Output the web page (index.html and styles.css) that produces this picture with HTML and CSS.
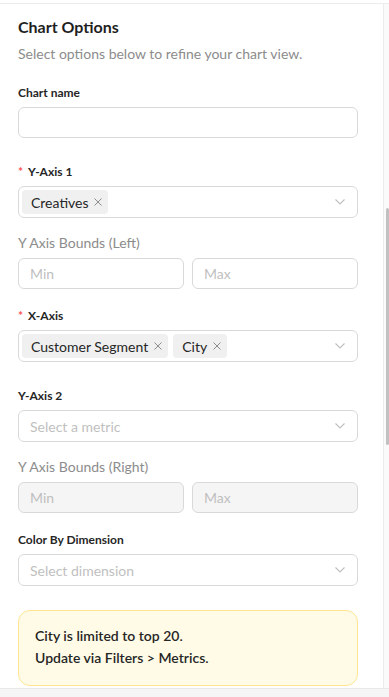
FILE: index.html
```html
<!DOCTYPE html>
<html>
<head>
    <title>Chart Options</title>
    <link rel="stylesheet" href="styles.css">
</head>
<body>
    <div class="main">
        <div class="panel">
            <h2 class="panel-title">Chart Options</h2>
            <p class="panel-desc">Select options below to refine your chart view.</p>

            <div class="field">
                <label class="field-label">Chart name</label>
                <input type="text" class="text-input">
            </div>

            <div class="field with-bounds">
                <label class="field-label"><span class="required">*</span>Y-Axis 1</label>
                <div class="select">
                    <div class="select-tags">
                        <span class="tag">Creatives<svg class="tag-close" width="8" height="8" viewBox="0 0 8 8"><path d="M0.5 0.5 L7.5 7.5 M7.5 0.5 L0.5 7.5" stroke="#8c8c8c" stroke-width="1"/></svg></span>
                    </div>
                    <svg class="chevron" width="10" height="6" viewBox="0 0 10 6"><path d="M0.5 0.5 L5 5 L9.5 0.5" fill="none" stroke="#bfbfbf" stroke-width="1.1"/></svg>
                </div>
            </div>

            <div class="bounds">
                <div class="bounds-label">Y Axis Bounds (Left)</div>
                <div class="bounds-row">
                    <input type="text" class="text-input" placeholder="Min">
                    <input type="text" class="text-input" placeholder="Max">
                </div>
            </div>

            <div class="field">
                <label class="field-label"><span class="required">*</span>X-Axis</label>
                <div class="select">
                    <div class="select-tags">
                        <span class="tag">Customer Segment<svg class="tag-close" width="8" height="8" viewBox="0 0 8 8"><path d="M0.5 0.5 L7.5 7.5 M7.5 0.5 L0.5 7.5" stroke="#8c8c8c" stroke-width="1"/></svg></span>
                        <span class="tag">City<svg class="tag-close" width="8" height="8" viewBox="0 0 8 8"><path d="M0.5 0.5 L7.5 7.5 M7.5 0.5 L0.5 7.5" stroke="#8c8c8c" stroke-width="1"/></svg></span>
                    </div>
                    <svg class="chevron" width="10" height="6" viewBox="0 0 10 6"><path d="M0.5 0.5 L5 5 L9.5 0.5" fill="none" stroke="#bfbfbf" stroke-width="1.1"/></svg>
                </div>
            </div>

            <div class="field with-bounds">
                <label class="field-label">Y-Axis 2</label>
                <div class="select">
                    <span class="select-placeholder">Select a metric</span>
                    <svg class="chevron" width="10" height="6" viewBox="0 0 10 6"><path d="M0.5 0.5 L5 5 L9.5 0.5" fill="none" stroke="#bfbfbf" stroke-width="1.1"/></svg>
                </div>
            </div>

            <div class="bounds">
                <div class="bounds-label">Y Axis Bounds (Right)</div>
                <div class="bounds-row">
                    <input type="text" class="text-input" placeholder="Min" disabled>
                    <input type="text" class="text-input" placeholder="Max" disabled>
                </div>
            </div>

            <div class="field">
                <label class="field-label">Color By Dimension</label>
                <div class="select">
                    <span class="select-placeholder">Select dimension</span>
                    <svg class="chevron" width="10" height="6" viewBox="0 0 10 6"><path d="M0.5 0.5 L5 5 L9.5 0.5" fill="none" stroke="#bfbfbf" stroke-width="1.1"/></svg>
                </div>
            </div>

            <div class="notice">
                City is limited to top 20.<br>
                Update via Filters &gt; Metrics.
            </div>
        </div>
        <div class="scroll-track">
            <div class="scroll-thumb"></div>
        </div>
    </div>
    <div class="footer"></div>
</body>
</html>
```

FILE: styles.css
```css
* {
    box-sizing: border-box;
}

body {
    font-family: Lato, "Noto Sans", sans-serif;
    background-color: #fff;
    color: #262626;
    margin: 0;
    padding: 0;
    height: 697px;
    display: flex;
    flex-direction: column;
    overflow: hidden;
}

.main {
    flex: 1;
    display: flex;
    margin-top: 3px;
    border-top: 1px solid #ececec;
    min-height: 0;
}

.panel {
    flex: 1;
    padding: 12px 25px 0 18px;
    border-right: 1px solid #ececec;
    overflow: hidden;
}

.panel-title {
    font-size: 16px;
    line-height: 22px;
    font-weight: 700;
    color: #1f1f1f;
    margin: 0;
}

.panel-desc {
    font-size: 14px;
    line-height: 20px;
    color: #8c8c8c;
    margin: 6px 0 20px;
}

.field {
    margin-bottom: 25px;
}

.field.with-bounds {
    margin-bottom: 15px;
}

.field-label {
    display: block;
    font-size: 12px;
    line-height: 18px;
    font-weight: 700;
    color: #262626;
    margin-bottom: 5px;
}

.required {
    color: #ff4d4f;
    margin-right: 5px;
}

.text-input {
    display: block;
    width: 100%;
    height: 31px;
    padding: 0 11px;
    border: 1px solid #d9d9d9;
    border-radius: 6px;
    font-family: inherit;
    font-size: 14px;
    color: #262626;
    background-color: #fff;
    outline: none;
}

.text-input::placeholder {
    color: #bfbfbf;
}

.text-input:disabled {
    background-color: #f5f5f5;
}

.select {
    display: flex;
    align-items: center;
    height: 32px;
    padding: 0 12px 0 3px;
    border: 1px solid #d9d9d9;
    border-radius: 6px;
}

.select-tags {
    flex: 1;
    display: flex;
    gap: 5px;
}

.select-placeholder {
    flex: 1;
    padding-left: 8px;
    font-size: 14px;
    color: #bfbfbf;
}

.tag {
    display: inline-flex;
    align-items: center;
    height: 24px;
    padding: 0 6px 0 9px;
    background-color: #f0f0f0;
    border-radius: 4px;
    font-size: 14px;
    color: #262626;
}

.tag-close {
    display: block;
    margin-left: 6px;
}

.chevron {
    display: block;
}

.bounds {
    margin-bottom: 18px;
}

.bounds-label {
    font-size: 14px;
    line-height: 20px;
    color: #8c8c8c;
    margin-bottom: 5px;
}

.bounds-row {
    display: flex;
    gap: 8px;
}

.notice {
    margin-top: -1px;
    padding: 14px 16px 16px;
    background-color: #fffbe6;
    border: 1px solid #ffe58f;
    border-radius: 12px;
    font-size: 14px;
    line-height: 22px;
    font-weight: 600;
    color: #262626;
}

.scroll-track {
    width: 5px;
    background-color: #fafafa;
    padding: 204px 0 0 2px;
}

.scroll-thumb {
    height: 237px;
    background-color: #c1c1c1;
    border-radius: 2px;
}

.footer {
    height: 9px;
    background-color: #f5f5f5;
    border-top: 1px solid #e8e8e8;
}
```
